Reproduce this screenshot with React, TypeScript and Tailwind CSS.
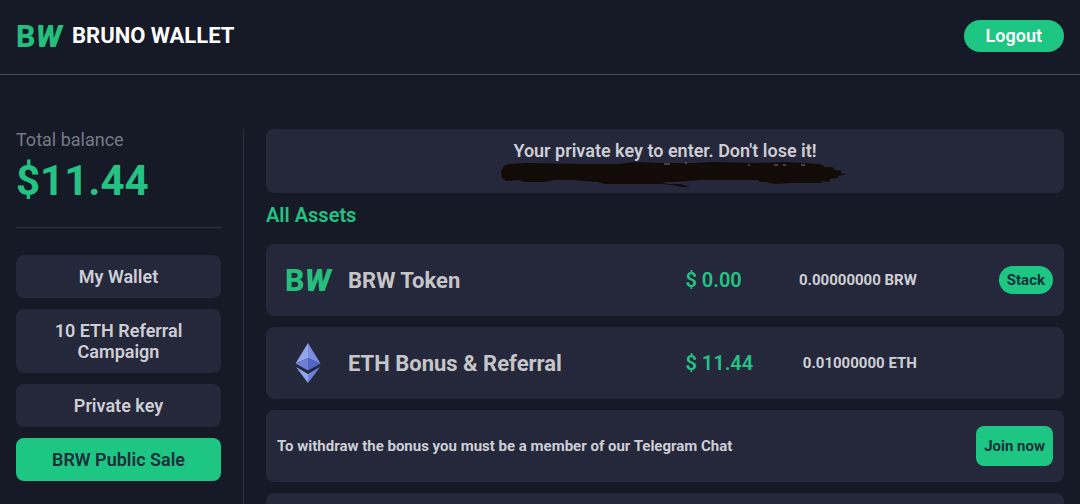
import type { ReactNode } from "react";

const navItems = [
  { label: "My Wallet", active: false },
  { label: "10 ETH Referral Campaign", active: false },
  { label: "Private key", active: false },
  { label: "BRW Public Sale", active: true },
];

function BrunoLogo() {
  return (
    <svg width="46" height="28" viewBox="0 0 46 28" className="shrink-0 overflow-visible fill-[#25be7c]" aria-hidden="true">
      <text x="-1" y="25" className="text-[31px]">
        <tspan className="font-['Open_Sans'] font-bold">B</tspan>
        <tspan className="font-['Roboto'] font-black italic">W</tspan>
      </text>
    </svg>
  );
}

function EthereumLogo() {
  return (
    <svg width="28" height="42" viewBox="0 0 28 42" className="shrink-0" aria-hidden="true">
      <path d="M14 1 1.5 21.5 14 16Z" fill="#94a6ea" />
      <path d="M14 1 26.5 21.5 14 16Z" fill="#7b8fe2" />
      <path d="M1.5 21.5 14 16v12.500Z" fill="#6c80d8" />
      <path d="M26.500 21.500 14 16v12.500Z" fill="#5167c8" />
      <path d="M2 25 14 32v9Z" fill="#91a4ee" />
      <path d="M26 25 14 32v9Z" fill="#6f83dc" />
    </svg>
  );
}

function Scribble() {
  return (
    <svg width="362" height="28" viewBox="0 0 362 28" className="max-w-full" aria-hidden="true">
      <path
        d="M20 4 24 2 42 1 96 2 134 2 150 0 178 1 212 1 226 0 276 1 300 0 318 1 336 2 341 5 348 5 351 8 358 9 356 11 362 12 354 14 354 16 346 17 345 20 336 19 338 21 306 21 290 22 282 20 276 20 274 18 216 18 204 19 190 20 178 20 184 22 196 22 206 25 198 25 188 23 178 22 120 22 114 20 100 19 90 18 70 18 60 20 40 20 36 18 22 19 18 16 17 9Z"
        fill="#120b08"
      />
      <path d="M180 2h6M201 1h2M264 3h2M290 3h4M299 3h3M317 3h4" stroke="#8b786c" strokeWidth="1" />
    </svg>
  );
}

function Card({ children }: { children?: ReactNode }) {
  return <li className="flex h-[72px] items-center rounded-lg bg-[#25273b] px-[11px]">{children}</li>;
}

type AssetProps = {
  logo: ReactNode;
  name: string;
  price: string;
  amount: string;
  action?: ReactNode;
};

function Asset({ logo, name, price, amount, action }: AssetProps) {
  return (
    <Card>
      <div className="grid w-full grid-cols-[30fr_17fr_10fr] items-center">
        <div className="flex items-center gap-[9px]">
          <div className="flex w-[62px] justify-center">{logo}</div>
          <h3 className="text-[22px] font-bold text-[#c6c6c8]">{name}</h3>
        </div>
        <div className="flex items-center justify-between">
          <span className="text-xl font-semibold text-[#23c483]">{price}</span>
          <span className="text-[15px] font-bold text-[#cfcfd3]">{amount}</span>
        </div>
        <div className="flex justify-end">{action}</div>
      </div>
    </Card>
  );
}

export default function App() {
  return (
    <div className="flex h-screen flex-col overflow-hidden bg-[#161926] font-['Roboto',sans-serif] text-[#cdced4]">
      <header className="flex shrink-0 items-center justify-between border-b border-[#474a57] px-4 pt-5 pb-[22px]">
        <a href="#home" className="flex items-center gap-[10px]">
          <BrunoLogo />
          <h1 className="text-[22px] leading-8 font-bold text-white">BRUNO WALLET</h1>
        </a>
        <button type="button" className="h-8 rounded-full bg-[#1dc683] px-[22px] text-lg leading-8 font-semibold text-white">
          Logout
        </button>
      </header>

      <div className="flex min-h-0 flex-1 px-4 pt-[54px]">
        <aside className="w-[228px] shrink-0 border-r border-[#2c2f3d] pr-[22px]">
          <p className="text-lg leading-[22px] text-[#777a86]">Total balance</p>
          <p className="text-[42px] leading-[60px] font-bold text-[#23c483]">$11.44</p>
          <hr className="mt-4 border-[#2f323f]" />
          <nav className="mt-[27px] flex flex-col gap-[11px]">
            {navItems.map((item) => (
              <a
                key={item.label}
                href="#section"
                className={
                  item.active
                    ? "rounded-lg bg-[#1dc683] px-6 py-[11px] text-center text-lg leading-[21px] font-semibold text-[#1c2f3a]"
                    : "rounded-lg bg-[#25273b] px-6 py-[11px] text-center text-lg leading-[21px] font-semibold"
                }
              >
                {item.label}
              </a>
            ))}
          </nav>
        </aside>

        <main className="min-w-0 flex-1 pl-[22px]">
          <section className="flex h-16 flex-col items-center rounded-lg bg-[#25273b] pt-[11px]">
            <p className="text-lg leading-[22px] font-semibold">Your private key to enter. Don't lose it!</p>
            <Scribble />
          </section>
          <h2 className="mt-[7px] text-xl leading-[30px] font-semibold text-[#23c483]">All Assets</h2>
          <ul className="mt-[14px] flex flex-col gap-[11px]">
            <Asset
              logo={<BrunoLogo />}
              name="BRW Token"
              price="$ 0.00"
              amount="0.00000000 BRW"
              action={
                <button type="button" className="h-7 rounded-full bg-[#1dc683] px-2 text-[15px] font-bold text-[#1c2f3a]">
                  Stack
                </button>
              }
            />
            <Asset logo={<EthereumLogo />} name="ETH Bonus & Referral" price="$ 11.44" amount="0.01000000 ETH" />
            <Card>
              <p className="flex-1 text-[15px] font-bold">To withdraw the bonus you must be a member of our Telegram Chat</p>
              <button type="button" className="h-10 rounded-lg bg-[#1dc683] px-2 text-[15px] font-bold text-[#1c2f3a]">
                Join now
              </button>
            </Card>
            <Card />
          </ul>
        </main>
      </div>
    </div>
  );
}
